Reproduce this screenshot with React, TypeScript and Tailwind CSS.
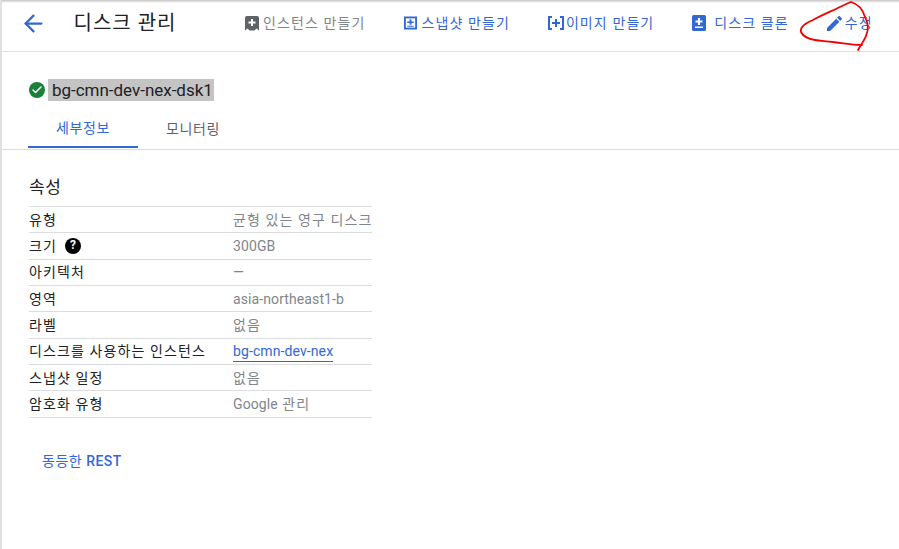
import { ArrowLeft, Check } from 'lucide-react';
import type { ReactNode } from 'react';

const font = { fontFamily: '"Roboto", "Noto Sans CJK KR", sans-serif' };

function ToolbarItem({ icon, label, className }: { icon: ReactNode; label: string; className: string }) {
  return (
    <div className={`flex items-center text-sm tracking-[1.1px] ${className}`}>
      {icon}
      <span>{label}</span>
    </div>
  );
}

function Row({ label, children }: { label: ReactNode; children: ReactNode }) {
  return (
    <div className="flex h-[26.35px] items-center border-b border-[#dadce0] text-sm">
      <div className="flex w-[204px] shrink-0 items-center whitespace-nowrap tracking-[1.1px] text-[#202124]">{label}</div>
      <div className="whitespace-nowrap tracking-[1.1px] text-[#80868b]">{children}</div>
    </div>
  );
}

function Latin({ children }: { children: ReactNode }) {
  return <span className="tracking-[0.1px]">{children}</span>;
}

export default function App() {
  return (
    <div className="relative flex h-[549px] w-[899px] flex-col overflow-hidden border-l-2 border-[#e0e0e0] bg-white" style={font}>
      <div className="h-[3px] bg-gradient-to-b from-[#c4c4c4] to-white" />

      {/* toolbar */}
      <div className="flex h-[49px] items-center border-b border-[#e0e0e0] pb-[8px]">
        <ArrowLeft className="ml-[17.5px] h-[27px] w-[27px] text-[#3367d6]" strokeWidth={2} />
        <h1 className="ml-[27px] w-[171.5px] text-[20px] tracking-[1px] text-[#202124]">디스크 관리</h1>
        <ToolbarItem
          className="text-[#80868b]"
          label="인스턴스 만들기"
          icon={
            <svg viewBox="0 0 14 16" className="mr-[4px] h-[16px] w-[14px]">
              <path fill="#5f6368" d="M2 1h10a2 2 0 0 1 2 2v12.500l-2.500-2-2 2h-5l-2-2-2.500 2V3a2 2 0 0 1 2-2z" />
              <path fill="#fff" d="M6 4h2v2.500h2.500v2H8V11H6V8.500H3.500v-2H6z" />
            </svg>
          }
        />
        <ToolbarItem
          className="ml-[39px] text-[#3367d6]"
          label="스냅샷 만들기"
          icon={
            <svg viewBox="0 0 14 14" className="mr-[4px] h-[14px] w-[13px]">
              <path fill="#3367d6" d="M0 0h14v14H0z" />
              <path fill="#fff" d="M2 2h10v10H2z" />
              <path fill="#3367d6" d="M6 3h2v2.500h2.500v1.500H8v2H6V7H3.500V5.500H6zM3.500 10h7v1h-7z" />
            </svg>
          }
        />
        <ToolbarItem
          className="ml-[38px] text-[#3367d6]"
          label="이미지 만들기"
          icon={
            <svg viewBox="0 0 16 16" className="mr-[2px] h-[16px] w-[16px]">
              <path fill="#3367d6" d="M0 1h4v2H2v10h2v2H0zM16 1h-4v2h2v10h-2v2h4z" />
              <path fill="#3367d6" d="M7 4h2v3h3v2H9v3H7V9H4V7h3z" />
            </svg>
          }
        />
        <ToolbarItem
          className="ml-[38px] text-[#3367d6]"
          label="디스크 클론"
          icon={
            <svg viewBox="0 0 14 16" className="mr-[8px] h-[16px] w-[14px]">
              <rect x="0" y="0" width="14" height="16" rx="1.500" fill="#3367d6" />
              <path fill="#fff" d="M6 3h2v2.500h2.500v2H8V10H6V7.500H3.500v-2H6zM3 11.500h8V13H3z" />
            </svg>
          }
        />
        <ToolbarItem
          className="ml-[38px] text-[#3367d6]"
          label="수정"
          icon={
            <svg viewBox="3 3 18 18" className="mr-[3px] h-[15px] w-[15px]">
              <path
                fill="#3367d6"
                d="M3 17.250V21h3.750L17.810 9.940l-3.750-3.750L3 17.250zM20.710 7.040c.39-.39.39-1.020 0-1.410l-2.340-2.340c-.39-.39-1.020-.39-1.410 0l-1.830 1.830 3.750 3.750 1.830-1.830z"
              />
            </svg>
          }
        />
      </div>

      {/* disk name */}
      <div className="ml-[27px] mt-[27px] flex items-center">
        <span className="flex h-[16px] w-[16px] items-center justify-center rounded-full bg-[#188038]">
          <Check className="h-[12px] w-[12px] text-white" strokeWidth={3} />
        </span>
        <span className="ml-[3px] bg-[#c4c4c4] pl-[4px] pr-[1px] text-[17px] leading-[22px] tracking-[-0.02px] text-[#202124]">bg-cmn-dev-nex-dsk1</span>
      </div>

      {/* tabs */}
      <div className="mt-[9px] flex h-[40px] items-stretch border-b border-[#dadce0] pl-[26px] text-sm tracking-[0.6px]">
        <div className="mb-[1px] flex w-[110px] items-center justify-center border-b-2 border-[#3367d6] text-[#3367d6]">세부정보</div>
        <div className="mb-[1px] flex w-[110px] items-center justify-center text-[#5f6368]">모니터링</div>
      </div>

      {/* properties */}
      <div className="ml-[27px] mt-[26px] w-[343px]">
        <h2 className="mb-[8px] text-[17px] leading-[22px] tracking-[0.5px] text-[#202124]">속성</h2>
        <div className="border-t border-[#dadce0]">
          <Row label="유형">균형 있는 영구 디스크</Row>
          <Row
            label={
              <>
                크기
                <span className="ml-[8px] flex h-[16px] w-[16px] items-center justify-center rounded-full bg-black text-[12px] font-bold tracking-normal text-white">?</span>
              </>
            }
          >
            <Latin>300GB</Latin>
          </Row>
          <Row label="아키텍처">—</Row>
          <Row label="영역">
            <Latin>asia-northeast1-b</Latin>
          </Row>
          <Row label="라벨">없음</Row>
          <Row label="디스크를 사용하는 인스턴스">
            <span className="border-b border-[#3367d6] pb-[2px] tracking-[0.1px] text-[#3367d6]">bg-cmn-dev-nex</span>
          </Row>
          <Row label="스냅샷 일정">없음</Row>
          <Row label="암호화 유형">
            <Latin>Google</Latin> 관리
          </Row>
        </div>
      </div>

      <div className="ml-[40px] mt-[33px] text-sm tracking-[0.5px] text-[#3367d6]">
        동등한 <span className="font-medium">REST</span>
      </div>

      {/* red marker scribble over the edit button */}
      <svg className="absolute left-[-2px] top-0 h-[60px] w-[899px]" viewBox="0 0 899 60" fill="none">
        <path
          d="M851 2C858 4 863 10 865 17C868 22 869 30 866 36C864 41 860 46 858 50M862 45C852 45 842 43 833 42C826 41 820 41 815 40C808 39 803 36 801 32C800 28 803 24 813 20C822 15 832 11 840 7C844 5 848 3 851 2"
          stroke="#f00000"
          strokeWidth={1.800}
          strokeLinecap="round"
        />
      </svg>
    </div>
  );
}
